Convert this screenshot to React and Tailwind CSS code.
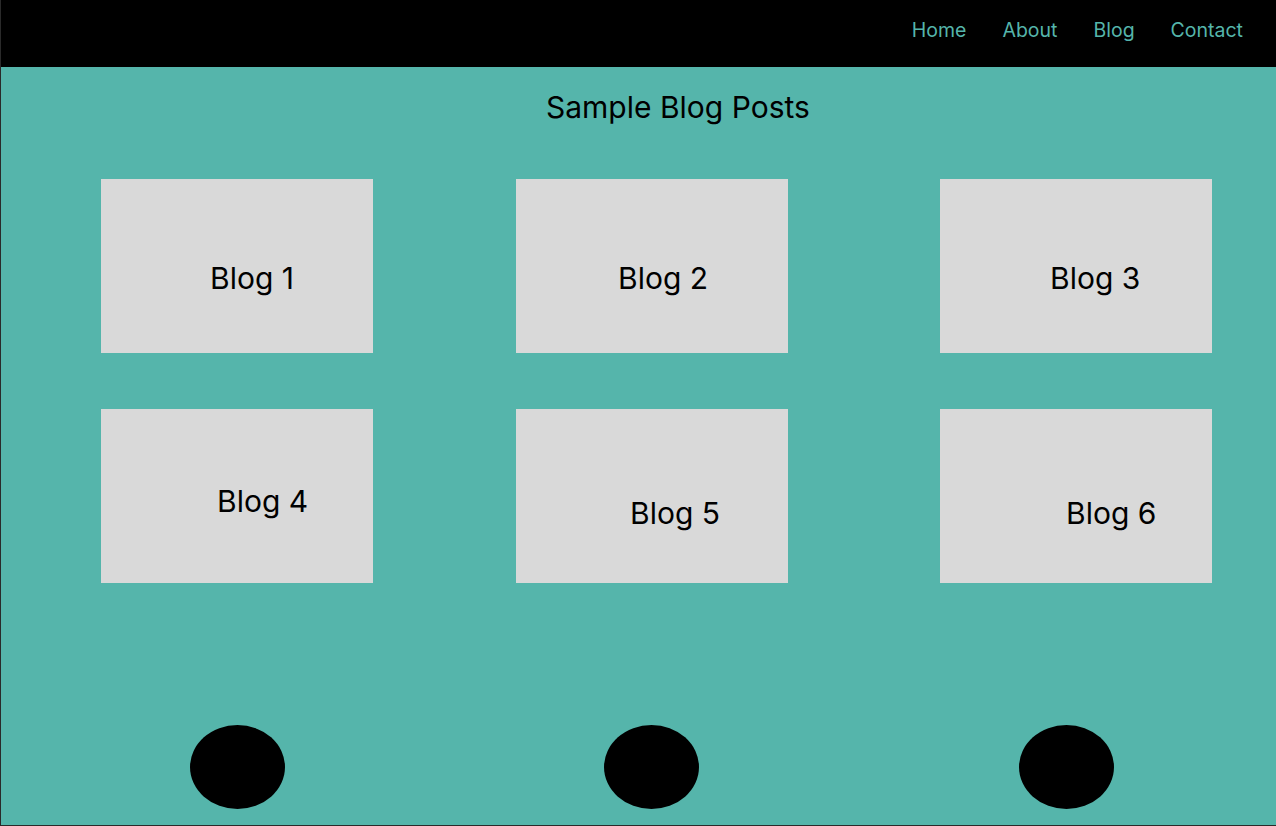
const navLinks = ["Home", "About", "Blog", "Contact"];

// per-card text offsets, read off the mockup
const rows = [
  [
    { title: "Blog 1", pl: "pl-[109px]", pt: "pt-[84px]", ml: "ml-[100px]" },
    { title: "Blog 2", pl: "pl-[102px]", pt: "pt-[84px]", ml: "ml-[143px]" },
    { title: "Blog 3", pl: "pl-[110px]", pt: "pt-[84px]", ml: "ml-[152px]" },
  ],
  [
    { title: "Blog 4", pl: "pl-[116px]", pt: "pt-[77px]", ml: "ml-[100px]" },
    { title: "Blog 5", pl: "pl-[114px]", pt: "pt-[89px]", ml: "ml-[143px]" },
    { title: "Blog 6", pl: "pl-[126px]", pt: "pt-[89px]", ml: "ml-[152px]" },
  ],
];

const dots = ["ml-[189px]", "ml-[319px]", "ml-[320px]"];

export default function App() {
  return (
    <div className="w-[1276px] h-[826px] border-l border-b border-[#2a2a2a] font-['Inter',sans-serif] overflow-hidden">
      {/* Header */}
      <header className="h-[67px] bg-black flex justify-end items-start pt-[21px] pr-[33px]">
        <nav className="flex gap-[36px]">
          {navLinks.map((link) => (
            <a
              key={link}
              href="#"
              className="text-[19.5px] leading-none text-[#55b5ab]"
            >
              {link}
            </a>
          ))}
        </nav>
      </header>

      {/* Body */}
      <main className="h-[758px] bg-[#55b5ab] flex flex-col">
        <div className="h-[112px] pt-[25px] pl-[545px]">
          <h1 className="text-[30px] leading-none text-black">
            Sample Blog Posts
          </h1>
        </div>

        <div className="flex flex-col gap-[56px]">
          {rows.map((row, i) => (
            <div key={i} className="flex">
              {row.map((post) => (
                <div
                  key={post.title}
                  className={`${post.ml} ${post.pl} ${post.pt} w-[272px] h-[174px] bg-[#d9d9d9]`}
                >
                  <span className="text-[30px] leading-none text-black">
                    {post.title}
                  </span>
                </div>
              ))}
            </div>
          ))}
        </div>

        <div className="flex mt-[142px]">
          {dots.map((ml, i) => (
            <div key={i} className={`${ml} w-[95px] h-[84px] rounded-[50%] bg-black`} />
          ))}
        </div>
      </main>
    </div>
  );
}
